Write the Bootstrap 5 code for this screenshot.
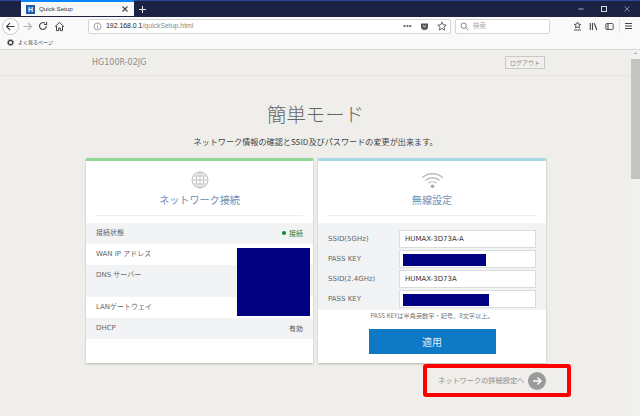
<!DOCTYPE html>
<html lang="ja">
<head>
<meta charset="utf-8">
<title>Quick Setup</title>
<link rel="stylesheet" href="https://cdn.jsdelivr.net/npm/bootstrap@5.3.0/dist/css/bootstrap.min.css">
<style>
html,body{height:416px;overflow:hidden;}
body{background:#efeeeb;font-family:"DejaVu Sans","Noto Sans CJK JP",sans-serif;color:#666;font-size:7px;line-height:1.2;}
.shell{height:416px;}
.titlebar{height:17px;background:#1c2244;border-top:1px solid #2b4a9e;}
.tabx{width:113px;height:16px;margin-left:21px;background:#f9f9fa;border-top:2px solid #0a84ff;margin-top:-1px;padding:0 5px 0 5px;color:#333;font-size:6.2px;font-family:"Liberation Sans","Noto Sans CJK JP",sans-serif;}
.favicon{width:9px;height:9px;background:#1d5ba8;color:#fff;font-size:7px;font-weight:700;line-height:9px;text-align:center;}
.newtab{margin:4px 0 0 4px;}
.winctl{gap:15px;padding:4px 9px 0 0;}
.toolbar{height:18px;background:#f9f9fa;}
.urlbox{height:15px;background:#fff;border:1px solid #d5d5d8;border-radius:2px;font-family:"Liberation Sans","Noto Sans CJK JP",sans-serif;font-size:6.9px;}
.url-w{width:363px;margin-left:23px;padding:0 3px 0 4px;}
.search-w{width:95px;margin-left:4px;padding:0 4px;color:#aaa;font-size:6.5px;}
.bookbar{height:15px;background:#f9f9fa;border-bottom:1px solid #d8d8da;padding-left:7px;font-size:5px;color:#333;font-family:"Liberation Sans","Noto Sans CJK JP",sans-serif;}
.chromeicon{display:block;flex:none;}
.backring{width:17px;height:17px;border:1px solid #c8c8cc;border-radius:50%;background:#fff;margin-left:2px;}
.fwd-i{margin-left:3px;}
.reload-i{margin-left:5px;}
.home-i{margin-left:6px;}
.dots3{color:#555;letter-spacing:.5px;font-weight:700;}
.host-t{color:#222;}
.path-t{color:#8a8a8a;}
.rightbar{gap:7px;margin-left:23px;}
.menu-i{margin-left:-2px;}
.pagearea{height:366px;min-height:0;}
.scrolltrack{width:9px;background:#f1f1f1;flex:none;}
.scrollthumb{height:120px;background:#c4c4c4;margin-top:0;}
.scrollup{height:9px;color:#555;font-size:6px;text-align:center;line-height:9px;}
.mainpane{min-width:0;position:relative;}
.headband{height:26px;border-bottom:1px solid #e6e5e2;padding:0 7px 0 92px;}
.modelname{font-size:8px;color:#8b8b8b;}
.logoutbtn{height:13px;width:40px;padding:0;border:1px solid #c9c9c6;border-radius:0;font-size:6px;line-height:11px;color:#888;background:#f1f0ee;margin-right:79px;}
.pagetitle{font-size:19.4px;line-height:26px;font-weight:300;color:#666;margin:25px 0 0;text-align:center;width:631px;font-family:"Noto Sans CJK JP",sans-serif;}
.pagesub{font-size:8.15px;line-height:12px;color:#444;margin:9px 0 0;text-align:center;width:631px;font-family:"Noto Sans CJK JP",sans-serif;}
.cardrow{margin:10px 0 0 86px;gap:5px;}
.panelcard{width:227px;height:205px;border:0;border-top:3px solid #92d696;border-radius:0;box-shadow:0 1px 2px rgba(0,0,0,.25);background:#fff;}
.panelcard.wifi{border-top-color:#a7d9e9;width:228px;}
.cardhead{height:55px;margin:0 10px;border-bottom:1px solid #eee;padding-top:10px;text-align:center;}
.cardhead svg{display:block;margin:0 auto;}
.cardtitle{font-size:10.1px;line-height:14px;color:#6e8fb8;margin-top:4px;font-family:"Noto Sans CJK JP",sans-serif;font-weight:400;}
.infolist{margin-top:7px;position:relative;}
.inforow{padding:0 10px;display:flex;justify-content:space-between;font-size:7px;color:#666;}
.inforow.shade{background:#f2f3f5;}
.r21{height:21px;padding-top:6px;}
.r32{height:32px;padding-top:6px;}
.stat-on{color:#2e7d32;margin-top:1px;}
.dot{display:inline-block;width:4px;height:4px;border-radius:50%;background:#0a8a2a;margin-right:3px;vertical-align:1px;}
.val-b{color:#555;margin-top:1px;}
.maskleft{position:absolute;left:151px;top:25px;width:73px;height:68px;background:#000080;}
.wifipanel{margin-top:7px;background:#f2f3f5;height:87px;padding:6px 10px 0;}
.fieldline{height:20px;}
.fieldlabel{width:71px;font-size:7px;color:#666;flex:none;}
.fieldbox{width:137px;height:18px;padding:0 5px;font-size:7px;color:#333;border:1px solid #dcdcdc;border-radius:0;background:#fff;position:relative;line-height:16px;}
input.fieldbox{box-shadow:none;min-height:0;}
.maskpw{position:absolute;left:3px;top:3px;height:12px;background:#000080;}
.notetext{font-size:6.2px;line-height:8px;color:#777;text-align:center;margin:2px 0 0;font-family:"Noto Sans CJK JP",sans-serif;}
.applybtn{display:block;width:127px;height:25px;margin:9px auto 0;padding:0;background:#0f79c6;border:0;border-radius:0;color:#dfeef9;font-size:10px;line-height:25px;font-family:"Noto Sans CJK JP",sans-serif;}
.nextbox{position:absolute;left:423px;top:314px;width:148px;height:33px;border:4px solid #f00;border-radius:3px;padding-left:11px;gap:4px;color:#8d8d8d;font-size:7.2px;white-space:nowrap;font-family:"Noto Sans CJK JP",sans-serif;}
.nextarrow{width:18px;height:18px;border-radius:50%;background:#9a9a9a;flex:none;}
</style>
</head>
<body>
<div class="shell d-flex flex-column">
  <div class="titlebar d-flex align-items-start">
    <div class="tabx d-flex align-items-center gap-1">
      <span class="favicon">H</span>
      <span class="flex-grow-1">Quick Setup</span>
      <svg class="chromeicon" width="8" height="8" viewBox="0 0 8 8"><path d="M1.500 1.500l5 5M6.500 1.500l-5 5" stroke="#444" stroke-width="1.100"/></svg>
    </div>
    <svg class="chromeicon newtab" width="9" height="9" viewBox="0 0 9 9"><path d="M4.500 1v7M1 4.500h7" stroke="#e8e8ee" stroke-width="1"/></svg>
    <div class="d-flex ms-auto align-items-center winctl">
      <svg class="chromeicon" width="8" height="8" viewBox="0 0 8 8"><path d="M1.500 4h5" stroke="#aeb2c4" stroke-width="1"/></svg>
      <svg class="chromeicon" width="8" height="8" viewBox="0 0 8 8"><rect x="1.500" y="1.500" width="5" height="5" fill="none" stroke="#d8dae4" stroke-width="1"/></svg>
      <svg class="chromeicon" width="8" height="8" viewBox="0 0 8 8"><path d="M1.500 1.500l5 5M6.500 1.500l-5 5" stroke="#8a8fa6" stroke-width=".9"/></svg>
    </div>
  </div>
  <div class="toolbar d-flex align-items-center">
    <div class="backring d-flex align-items-center justify-content-center">
      <svg width="11" height="11" viewBox="0 0 11 11"><path d="M9.500 5.500h-8M5 2L1.500 5.500 5 9" fill="none" stroke="#444" stroke-width="1.100"/></svg>
    </div>
    <svg class="chromeicon fwd-i" width="11" height="11" viewBox="0 0 11 11"><path d="M1.500 5.500h8M6 2l3.500 3.500L6 9" fill="none" stroke="#b4b4b8" stroke-width="1.100"/></svg>
    <svg class="chromeicon reload-i" width="10" height="10" viewBox="0 0 10 10"><path d="M8.300 5A3.400 3.400 0 1 1 7 2.300M8.600.9v2.600H6" fill="none" stroke="#444" stroke-width="1.100"/></svg>
    <svg class="chromeicon home-i" width="11" height="11" viewBox="0 0 11 11"><path d="M1 5.700L5.500 1.400 10 5.700M2.500 5v4.600h2.200V7h1.600v2.600h2.200V5" fill="none" stroke="#444" stroke-width="1"/></svg>
    <div class="urlbox url-w d-flex align-items-center gap-1">
      <svg class="chromeicon" width="9" height="9" viewBox="0 0 9 9"><circle cx="4.500" cy="4.500" r="3.500" fill="none" stroke="#888" stroke-width=".8"/><path d="M4.500 4v2.500M4.500 2.500v.9" stroke="#888" stroke-width=".8"/></svg>
      <span class="flex-grow-1"><span class="host-t">192.168.0.1</span><span class="path-t">/quickSetup.html</span></span>
      <span class="dots3">•••</span>
      <svg class="chromeicon ms-1" width="9" height="9" viewBox="0 0 9 9"><path d="M1 1.500h7v3a3.500 3.500 0 0 1-7 0z" fill="#555"/><path d="M3 3.500l1.500 1.400L6 3.500" fill="none" stroke="#fff" stroke-width=".9"/></svg>
      <svg class="chromeicon ms-1" width="10" height="10" viewBox="0 0 10 10"><path d="M5 1l1.200 2.800 3 .3-2.300 2 .7 3L5 7.500 2.400 9.100l.7-3-2.300-2 3-.3z" fill="none" stroke="#444" stroke-width=".8"/></svg>
    </div>
    <div class="urlbox search-w d-flex align-items-center gap-1">
      <svg class="chromeicon" width="9" height="9" viewBox="0 0 9 9"><circle cx="3.700" cy="3.700" r="2.700" fill="none" stroke="#777" stroke-width=".9"/><path d="M5.800 5.800L8.300 8.300" stroke="#777" stroke-width=".9"/></svg>
      <span>検索</span>
    </div>
    <div class="d-flex align-items-center rightbar">
      <svg class="chromeicon" width="9" height="10" viewBox="0 0 9 10"><path d="M4.500 1l1 2.200 2.200.2-1.700 1.500.5 2.100-2-1.100-2 1.100.5-2.100L1.300 3.400l2.200-.2zM1 9h7" fill="none" stroke="#444" stroke-width=".9"/></svg>
      <svg class="chromeicon" width="9" height="9" viewBox="0 0 9 9"><path d="M1.300 1v7M3.500 1v7M5.300 1.300l2.500 6.700" fill="none" stroke="#444" stroke-width="1.100"/></svg>
      <svg class="chromeicon" width="9" height="9" viewBox="0 0 9 9"><rect x=".8" y="1.500" width="7.400" height="6" rx="1" fill="none" stroke="#444" stroke-width=".9"/><rect x="1.500" y="2" width="2.500" height="5" fill="#999"/></svg>
      <svg class="chromeicon menu-i" width="15" height="14" viewBox="0 0 15 14"><path d="M.5 0v14" stroke="#e4e4e6" stroke-width="1"/><path d="M6 4.500h7M6 7h7M6 9.500h7" stroke="#444" stroke-width="1"/></svg>
    </div>
  </div>
  <div class="bookbar d-flex align-items-center gap-1">
    <svg class="chromeicon" width="7" height="7" viewBox="0 0 7 7"><circle cx="3.500" cy="3.500" r="2.200" fill="none" stroke="#333" stroke-width="1.200"/><circle cx="3.500" cy="3.500" r="3.200" fill="none" stroke="#333" stroke-width=".7" stroke-dasharray="1 1"/></svg>
    <span>よく見るページ</span>
  </div>
  <div class="pagearea d-flex flex-grow-1">
    <div class="mainpane flex-grow-1">
      <div class="headband d-flex align-items-center justify-content-between">
        <span class="modelname">HG100R-02JG</span>
        <button type="button" class="btn logoutbtn">ログアウト</button>
      </div>
      <h1 class="pagetitle">簡単モード</h1>
      <p class="pagesub">ネットワーク情報の確認とSSID及びパスワードの変更が出来ます。</p>
      <div class="d-flex cardrow">
        <div class="card panelcard">
          <div class="cardhead">
            <svg width="18" height="18" viewBox="0 0 20 20" fill="none" stroke="#c4c4c4" stroke-width="1.200"><circle cx="10" cy="10" r="8.800"/><ellipse cx="10" cy="10" rx="4" ry="8.800"/><path d="M10 1.200v17.600M1.200 10h17.600M2.500 5.500h15M2.500 14.500h15"/></svg>
            <div class="cardtitle">ネットワーク接続</div>
          </div>
          <div class="infolist">
            <div class="inforow shade r21"><span>接続状態</span><span class="stat-on"><span class="dot"></span>接続</span></div>
            <div class="inforow r21"><span>WAN IP アドレス</span></div>
            <div class="inforow shade r32"><span>DNS サーバー</span></div>
            <div class="inforow r21"><span>LANゲートウェイ</span></div>
            <div class="inforow shade r21"><span>DHCP</span><span class="val-b">有効</span></div>
            <div class="maskleft"></div>
          </div>
        </div>
        <div class="card panelcard wifi">
          <div class="cardhead">
            <svg width="25" height="18" viewBox="0 0 26 20" fill="none" stroke="#bdbdbd" stroke-width="1.500"><path d="M1.500 7.500C7.500 1.500 18.500 1.500 24.500 7.500M5 10.500C9.500 6.500 16.500 6.500 21 10.500M8.500 13.500C11 11.500 15 11.500 17.500 13.500"/><circle cx="13" cy="17" r="2" fill="#a8a8a8" stroke="none"/></svg>
            <div class="cardtitle">無線設定</div>
          </div>
          <div class="wifipanel">
            <div class="fieldline d-flex align-items-center"><span class="fieldlabel">SSID(5GHz)</span><input class="form-control fieldbox" type="text" value="HUMAX-3D73A-A" aria-label="SSID 5GHz"></div>
            <div class="fieldline d-flex align-items-center"><span class="fieldlabel">PASS KEY</span><div class="fieldbox"><span class="maskpw" style="width:83px"></span></div></div>
            <div class="fieldline d-flex align-items-center"><span class="fieldlabel">SSID(2.4GHz)</span><input class="form-control fieldbox" type="text" value="HUMAX-3D73A" aria-label="SSID 2.4GHz"></div>
            <div class="fieldline d-flex align-items-center"><span class="fieldlabel">PASS KEY</span><div class="fieldbox"><span class="maskpw" style="width:86px"></span></div></div>
          </div>
          <p class="notetext">PASS KEYは半角英数字・記号、8文字以上。</p>
          <button type="button" class="btn applybtn">適用</button>
        </div>
      </div>
      <div class="nextbox d-flex align-items-center">
        <span>ネットワークの詳細設定へ</span>
        <span class="nextarrow d-flex align-items-center justify-content-center">
          <svg width="12" height="12" viewBox="0 0 12 12"><path d="M2 6h8M6.500 2.500L10 6 6.500 9.500" fill="none" stroke="#fff" stroke-width="1.400"/></svg>
        </span>
      </div>
    </div>
    <div class="scrolltrack">
      <div class="scrollup">⌃</div>
      <div class="scrollthumb"></div>
    </div>
  </div>
</div>
<script src="https://cdn.jsdelivr.net/npm/bootstrap@5.3.0/dist/js/bootstrap.bundle.min.js"></script>
</body>
</html>
